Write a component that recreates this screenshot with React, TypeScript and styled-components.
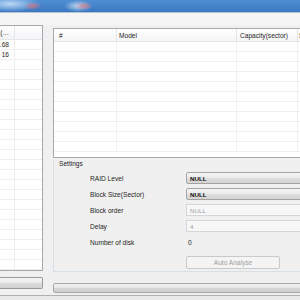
import React from "react";
import styled, { createGlobalStyle } from "styled-components";

const GlobalStyle = createGlobalStyle`
  html, body {
    margin: 0;
    padding: 0;
    background: #f0f0f0;
  }
  body {
    font-family: "Liberation Sans", Arial, sans-serif;
    font-size: 6.6px;
    color: #1e1e1e;
  }
`;

const leftRows = [".68", "16", "", "", "", "", "", "", "", "", "", "", "", "", "", "", "", "", "", "", "", "", ""];
const rightRows = Array.from({ length: 11 });

interface Field {
  label: string;
  kind: "combo" | "text" | "plain";
  value: string;
  disabled?: boolean;
}

const fields: Field[] = [
  { label: "RAID Level", kind: "combo", value: "NULL" },
  { label: "Block Size(Sector)", kind: "combo", value: "NULL" },
  { label: "Block order", kind: "text", value: "NULL", disabled: true },
  { label: "Delay", kind: "text", value: "4", disabled: true },
  { label: "Number of disk", kind: "plain", value: "0" },
];

const App: React.FC = () => {
  return (
    <Page>
      <GlobalStyle />
      <TitleBar />
      <MenuStrip />
      <Main>
        <LeftColumn>
          <ListBox>
            <LeftHeader>
              <LeftCell $w={15} $head>(…</LeftCell>
              <LeftCell $w={28} $head />
            </LeftHeader>
            {leftRows.map((r, i) => (
              <LeftRow key={i}>
                <LeftCell $w={15}>{r}</LeftCell>
                <LeftCell $w={28} />
              </LeftRow>
            ))}
          </ListBox>
          <WinButton $w={43} />
        </LeftColumn>
        <RightColumn>
          <DiskTable>
            <TableHeader>
              <HeadCell $w={63} $pad={5}>#</HeadCell>
              <HeadCell $w={120} $pad={2}>Model</HeadCell>
              <HeadCell $w={61} $pad={3}>Capacity(sector)</HeadCell>
              <HeadCell $w={40} $pad={1}>S</HeadCell>
            </TableHeader>
            {rightRows.map((_, i) => (
              <TableRow key={i}>
                <BodyCell $w={63} />
                <BodyCell $w={120} />
                <BodyCell $w={61} />
                <BodyCell $w={40} />
              </TableRow>
            ))}
          </DiskTable>
          <GroupBox>
            <GroupLegend>Settings</GroupLegend>
            <FieldGrid>
              {fields.map((f) => (
                <React.Fragment key={f.label}>
                  <FieldLabel>{f.label}</FieldLabel>
                  {f.kind === "combo" && <Combo>{f.value}</Combo>}
                  {f.kind === "text" && <TextBox $disabled={f.disabled}>{f.value}</TextBox>}
                  {f.kind === "plain" && <PlainValue>{f.value}</PlainValue>}
                </React.Fragment>
              ))}
              <span />
              <AnalyseButton>Auto Analyse</AnalyseButton>
            </FieldGrid>
          </GroupBox>
          <ProgressBar />
        </RightColumn>
      </Main>
      <BottomEdge />
    </Page>
  );
};

const Page = styled.div`
  width: 300px;
  height: 300px;
  overflow: hidden;
  display: flex;
  flex-direction: column;
`;

const TitleBar = styled.div`
  height: 12px;
  flex-shrink: 0;
  background:
    radial-gradient(ellipse 9px 4px at 33px 6px, rgba(225, 110, 120, 0.75), transparent),
    radial-gradient(ellipse 9px 4px at 84px 6px, rgba(225, 110, 120, 0.7), transparent),
    radial-gradient(ellipse 14px 6px at 78px 6px, rgba(220, 235, 250, 0.8), transparent),
    radial-gradient(ellipse 30px 8px at 10px 4px, rgba(200, 225, 250, 0.9), transparent),
    linear-gradient(to bottom, #4f8fd3, #3a78c2);
`;

const MenuStrip = styled.div`
  height: 12px;
  flex-shrink: 0;
  background: #f5f5f5;
  border-top: 1px solid #b5c3d3;
`;

const Main = styled.div`
  display: flex;
  gap: 10px;
  flex: 1;
  min-height: 0;
`;

const LeftColumn = styled.div`
  width: 43px;
  flex-shrink: 0;
  display: flex;
  flex-direction: column;
  gap: 6px;
`;

const ListBox = styled.div`
  height: 246px;
  flex-shrink: 0;
  background: #fff;
  border: 1px solid #a4a9b0;
  border-left: none;
  box-sizing: border-box;
  overflow: hidden;
`;

const LeftHeader = styled.div`
  display: flex;
  height: 13px;
  background: linear-gradient(#ffffff, #f3f4f6);
  border-bottom: 1px solid #e3e5e8;
`;

const LeftRow = styled.div`
  display: flex;
  height: 10px;
  border-bottom: 1px solid #eeeeee;
  box-sizing: border-box;
`;

const LeftCell = styled.div<{ $w: number; $head?: boolean }>`
  width: ${(p) => p.$w}px;
  flex-shrink: 0;
  box-sizing: border-box;
  border-right: 1px solid ${(p) => (p.$head ? "#e3e5e8" : "#eeeeee")};
  display: flex;
  align-items: center;
  justify-content: flex-end;
  padding-right: 5px;
  white-space: nowrap;
  overflow: hidden;
`;

const WinButton = styled.div<{ $w: number }>`
  width: ${(p) => p.$w}px;
  height: 12px;
  flex-shrink: 0;
  box-sizing: border-box;
  border: 1px solid #9a9a9a;
  border-left: none;
  border-radius: 0 2px 2px 0;
  background: linear-gradient(#f4f4f4 0%, #ebebeb 50%, #dcdcdc 51%, #d2d2d2 100%);
`;

const RightColumn = styled.div`
  flex: 1;
  display: flex;
  flex-direction: column;
  padding-top: 3px;
  min-width: 0;
`;

const DiskTable = styled.div`
  height: 130px;
  width: 260px;
  flex-shrink: 0;
  background: #fff;
  border: 1px solid #a4a9b0;
  box-sizing: border-box;
  overflow: hidden;
`;

const TableHeader = styled.div`
  display: flex;
  height: 12px;
  background: linear-gradient(#ffffff, #f4f5f7);
  border-bottom: 1px solid #e3e5e8;
`;

const HeadCell = styled.div<{ $w: number; $pad: number }>`
  width: ${(p) => p.$w}px;
  flex-shrink: 0;
  box-sizing: border-box;
  border-right: 1px solid #e3e5e8;
  padding-left: ${(p) => p.$pad}px;
  display: flex;
  align-items: center;
  white-space: nowrap;
  overflow: hidden;
`;

const TableRow = styled.div`
  display: flex;
  height: 10px;
  border-bottom: 1px solid #f0f0f0;
  box-sizing: border-box;
`;

const BodyCell = styled.div<{ $w: number }>`
  width: ${(p) => p.$w}px;
  flex-shrink: 0;
  box-sizing: border-box;
  border-right: 1px solid #f0f0f0;
`;

const GroupBox = styled.div`
  height: 112px;
  width: 260px;
  margin-top: 2px;
  flex-shrink: 0;
  box-sizing: border-box;
  border-left: 1px solid #d5dfe5;
  border-bottom: 1px solid #d5dfe5;
`;

const GroupLegend = styled.div`
  padding: 0 0 0 5px;
  height: 8px;
  line-height: 8px;
  background: #f0f0f0;
`;

const FieldGrid = styled.div`
  display: grid;
  grid-template-columns: 96px 120px;
  grid-auto-rows: 16px;
  padding-left: 36px;
  margin-top: 2px;
  align-items: center;
`;

const FieldLabel = styled.div`
  white-space: nowrap;
  color: #262626;
`;

const Combo = styled.div`
  height: 12px;
  box-sizing: border-box;
  border: 1px solid #a3a3a3;
  border-radius: 2px;
  background: linear-gradient(#f6f6f6 0%, #e9e9e9 50%, #dddddd 51%, #d4d4d4 100%);
  padding-left: 3px;
  display: flex;
  align-items: center;
  font-weight: bold;
  font-size: 6.2px;
  color: #111;
`;

const TextBox = styled.div<{ $disabled?: boolean }>`
  height: 12px;
  box-sizing: border-box;
  border: 1px solid ${(p) => (p.$disabled ? "#d6d6d6" : "#abadb3")};
  background: ${(p) => (p.$disabled ? "#f7f7f7" : "#fff")};
  color: ${(p) => (p.$disabled ? "#a0a0a0" : "#111")};
  padding-left: 3px;
  display: flex;
  align-items: center;
  font-size: 6.2px;
`;

const PlainValue = styled.div`
  padding-left: 2px;
`;

const AnalyseButton = styled.div`
  width: 94px;
  height: 13px;
  margin-top: 9px;
  box-sizing: border-box;
  border: 1px solid #c9c9c9;
  border-radius: 2px;
  background: #f4f4f4;
  color: #a0a0a0;
  display: flex;
  align-items: center;
  justify-content: center;
`;

const ProgressBar = styled.div`
  width: 260px;
  height: 10px;
  margin-top: 11px;
  flex-shrink: 0;
  box-sizing: border-box;
  border: 1px solid #a8a8a8;
  border-radius: 2px;
  background: linear-gradient(#f2f2f2 0%, #e6e6e6 50%, #d6d6d6 51%, #cfcfcf 100%);
`;

const BottomEdge = styled.div`
  height: 4px;
  flex-shrink: 0;
  border-top: 1px solid #b0b0b0;
  background: #e8e8e8;
`;

export default App;
